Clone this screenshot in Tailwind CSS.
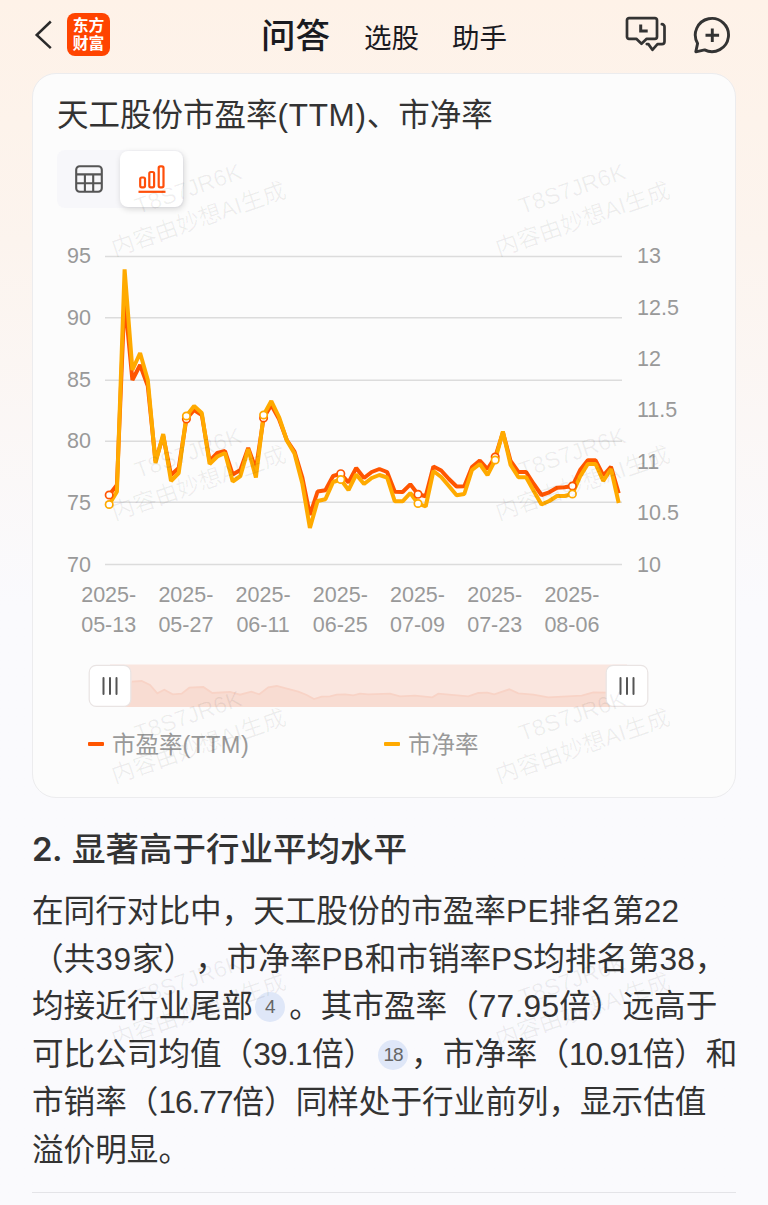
<!DOCTYPE html>
<html lang="zh-CN">
<head>
<meta charset="utf-8">
<title>问答</title>
<script src="https://cdn.jsdelivr.net/npm/@tailwindcss/browser@4"></script>
</head>
<body class="relative h-[1205px] w-[768px] overflow-hidden bg-[#fafafd] bg-linear-to-b from-[#fef2e8] from-0% via-[#fcf4ee] via-20% to-[#fafafd] to-50% font-['Liberation_Sans','Noto_Sans_CJK_SC',sans-serif] text-[#333] [text-spacing-trim:space-all]">

<header class="flex h-[73px] items-center pl-[34px] pr-[37px]">
  <svg class="h-[30px] w-[18px] shrink-0 -translate-y-[2px]" viewBox="0 0 18 30" fill="none" stroke="#2a2a2a" stroke-width="2.5"><path d="M16.8 1.500 2.700 15l14.100 13.200"/></svg>
  <div class="ml-[15px] flex h-[43px] w-[43px] shrink-0 -translate-y-[2px] flex-col items-center justify-center rounded-[8px] bg-[#ff4400] text-[15.8px] leading-[17.5px] font-bold text-white"><span>东方</span><span>财富</span></div>
  <nav class="ml-[151px] flex h-[50px] -translate-y-px items-baseline whitespace-nowrap text-[#1a1a1f]">
    <span class="w-[103px] text-[34.5px] leading-[50px] font-medium">问答</span>
    <span class="w-[88px] text-[27.5px]">选股</span>
    <span class="text-[27.5px]">助手</span>
  </nav>
  <svg class="ml-auto h-[38px] w-[42px] shrink-0 -translate-y-[2px]" viewBox="0 0 42 38" fill="none" stroke="#333" stroke-width="2.700" stroke-linejoin="round" stroke-linecap="round"><path d="M4 2.200h26a2 2 0 0 1 2 2v16.600a2 2 0 0 1-2 2h-8.300l-5.200 5-5.200-5H4a2 2 0 0 1-2-2V4.200a2 2 0 0 1 2-2z"/><path d="M36.800 8.200a2.600 2.600 0 0 1 2.700 2.600v14.700a2.600 2.600 0 0 1-2.600 2.600h-4.400l-5.100 5.700-4-5.700h-1.600"/><path d="M15.700 8.500v6.500h7" stroke-linecap="butt" stroke-linejoin="miter" stroke-width="3"/></svg>
  <svg class="ml-[26px] h-[38px] w-[38px] shrink-0 -translate-y-[2px]" viewBox="0 0 38 38" fill="none" stroke="#333" stroke-width="2.900" stroke-linejoin="round" stroke-linecap="round"><path d="M4.600 27.400A16.600 16.600 0 1 1 11.600 33.900L2.800 35.800z"/><path d="M19.300 12.500v13.600M12.500 19.300h13.600" stroke-linecap="butt"/></svg>
</header>

<main class="px-8">
  <section class="h-[725px] rounded-[24px] border border-[#ececee] bg-[#fcfcfc] px-[24px]">
    <h2 class="h-[76px] pt-[18px] text-[31.5px] leading-[46px] whitespace-nowrap">天工股份市盈率<span class="tracking-[0.7px]">(TTM)</span>、市净率</h2>
    <div class="flex h-[58px] w-[127px] items-center rounded-[8px] bg-[#f7f7fa]">
      <div class="flex h-full w-[63px] items-center justify-center">
        <svg class="h-[28px] w-[28px]" viewBox="0 0 28 28" fill="none" stroke="#555" stroke-width="2.100"><rect x="1.200" y="1.200" width="25.600" height="25.600" rx="3.500"/><path d="M1.200 9.400h25.600M1.200 18.300h25.600M9.900 9.400v17.400M18.200 9.400v17.400"/></svg>
      </div>
      <div class="flex h-[56px] w-[63px] items-center justify-center rounded-[8px] bg-white shadow-[1px_2px_6px_rgba(0,0,0,0.16)]">
        <svg class="h-[28px] w-[28px]" viewBox="0 0 28 28" fill="none" stroke="#ff4f0a" stroke-width="2.200"><rect x="2.200" y="12.500" width="4.800" height="9.800" rx="1.500"/><rect x="11.300" y="7" width="4.800" height="15.300" rx="1.500"/><rect x="20.700" y="1.400" width="4.800" height="20.900" rx="1.500"/><path d="M.5 26.800h27" stroke-width="2.200"/></svg>
      </div>
    </div>

    <svg class="block h-[442px] w-[654px]" viewBox="57 208 654 442" fill="none">
      <g stroke="#dcdcdc" stroke-width="1.500"><path d="M105 256.500h517M105 317.700h517M105 380.300h517M105 441.200h517M105 502.300h517M105 564.500h517"/></g>
      <g class="fill-[#999] text-[21.500px]">
        <g text-anchor="end"><text x="91" y="263.300">95</text><text x="91" y="325">90</text><text x="91" y="386.600">85</text><text x="91" y="448.200">80</text><text x="91" y="509.800">75</text><text x="91" y="571.500">70</text></g>
        <text x="637" y="263.300">13</text><text x="637" y="314.700">12.5</text><text x="637" y="366">12</text><text x="637" y="417.400">11.5</text><text x="637" y="468.700">11</text><text x="637" y="520.100">10.5</text><text x="637" y="571.500">10</text>
        <g text-anchor="middle">
          <text x="108.700" y="601.500">2025-</text><text x="108.700" y="632">05-13</text>
          <text x="185.900" y="601.500">2025-</text><text x="185.900" y="632">05-27</text>
          <text x="263.100" y="601.500">2025-</text><text x="263.100" y="632">06-11</text>
          <text x="340.300" y="601.500">2025-</text><text x="340.300" y="632">06-25</text>
          <text x="417.500" y="601.500">2025-</text><text x="417.500" y="632">07-09</text>
          <text x="494.700" y="601.500">2025-</text><text x="494.700" y="632">07-23</text>
          <text x="571.900" y="601.500">2025-</text><text x="571.900" y="632">08-06</text>
        </g>
      </g>
      <g id="series" stroke-width="4" stroke-linejoin="bevel"></g>
    </svg>

    <svg class="ml-[31px] block h-[64px] w-[562px]" viewBox="88 650 562 64" fill="none">
      <rect x="110" y="664.500" width="517" height="42.500" fill="#fae6df"/>
      <path id="mini" fill="#f8dcd2"/>
      <path id="miniLine" stroke="#f8d3c6" stroke-width="1.800"/>
      <g fill="#fff" stroke="#e9e4e3" stroke-width="1.200"><rect x="89.200" y="665.400" width="41.600" height="41" rx="7"/><rect x="606.200" y="665.400" width="41.600" height="41" rx="7"/></g>
      <path d="M103.500 678v16M110 678v16M116.500 678v16M620.500 678v16M627 678v16M633.500 678v16" stroke="#555" stroke-width="2" stroke-linecap="round"/>
    </svg>

    <div class="ml-[31px] flex h-[60px] items-center text-[23.500px] whitespace-nowrap text-[#999]">
      <div class="flex w-[296px] items-center gap-[8px]"><span class="h-[4px] w-[16px] rounded-[1px] bg-[#ff5500]"></span><span class="mt-[3px]">市盈率<span class="tracking-[0.6px]">(TTM)</span></span></div>
      <div class="flex items-center gap-[8px]"><span class="h-[4px] w-[16px] rounded-[1px] bg-[#ffaa00]"></span><span class="mt-[3px]">市净率</span></div>
    </div>
  </section>

  <h3 class="mt-[27px] flex h-[50px] items-center gap-[12px] text-[33.500px] font-medium whitespace-nowrap"><span class="w-[28px] font-['Inter'] text-[33px] font-semibold tracking-[-0.5px]">2.</span><span>显著高于行业平均水平</span></h3>
  <div class="mt-[13px] text-[31.600px] leading-[47.700px] whitespace-nowrap">
    <p>在同行对比中，天工股份的市盈率<span class="tracking-[0.5px]">PE</span>排名第22</p>
    <p>（共<span class="tracking-[0.8px]">39</span>家），市净率<span class="tracking-[0.5px]">PB</span>和市销率PS均排名第38，</p>
    <p class="flex items-center">均接近行业尾部<span class="mr-[4px] ml-[2px] h-[30px] w-[30px] shrink-0 rounded-full bg-[#dfe7f8] text-center text-[19px] leading-[30px] text-[#666]">4</span>。其市盈率（<span class="tracking-[0.300px]">77.95</span>倍）远高于</p>
    <p class="flex items-center">可比公司均值（<span class="tracking-[-0.700px]">39.1</span>倍）<span class="mx-[3px] h-[30px] w-[30px] shrink-0 rounded-full bg-[#dfe7f8] text-center text-[19px] leading-[30px] tracking-[-1px] text-[#666]">18</span>，市净率（<span class="tracking-[-1.100px]">10.91</span>倍）和</p>
    <p>市销率（<span class="tracking-[-1px]">16.77</span>倍）同样处于行业前列，显示估值</p>
    <p>溢价明显。</p>
  </div>
  <div class="mt-[18px] h-px bg-[#e4e4e8]"></div>
</main>

<!-- Watermark layer -->
<div class="pointer-events-none absolute left-0 top-[73px] grid w-[768px] grid-cols-2 text-center text-[23px] leading-[31.500px] whitespace-nowrap text-black/6">
  <div class="flex h-[263.500px] items-center justify-center pl-[3px]"><div class="-rotate-[19deg]">T8S7JR6K<br>内容由妙想AI生成</div></div>
  <div class="flex h-[263.500px] items-center justify-center pl-[3px]"><div class="-rotate-[19deg]">T8S7JR6K<br>内容由妙想AI生成</div></div>
  <div class="flex h-[263.500px] items-center justify-center pl-[3px]"><div class="-rotate-[19deg]">T8S7JR6K<br>内容由妙想AI生成</div></div>
  <div class="flex h-[263.500px] items-center justify-center pl-[3px]"><div class="-rotate-[19deg]">T8S7JR6K<br>内容由妙想AI生成</div></div>
  <div class="flex h-[263.500px] items-center justify-center pl-[3px]"><div class="-rotate-[19deg]">T8S7JR6K<br>内容由妙想AI生成</div></div>
  <div class="flex h-[263.500px] items-center justify-center pl-[3px]"><div class="-rotate-[19deg]">T8S7JR6K<br>内容由妙想AI生成</div></div>
  <div class="flex h-[263.500px] items-center justify-center pl-[3px]"><div class="-rotate-[19deg]">T8S7JR6K<br>内容由妙想AI生成</div></div>
  <div class="flex h-[263.500px] items-center justify-center pl-[3px]"><div class="-rotate-[19deg]">T8S7JR6K<br>内容由妙想AI生成</div></div>
</div>

<script>
const pe=[495,485,298,380,365,386,461,436,475,468,419,410,415,461,453,451,474.5,470,448,469,418,405,419,440,451.5,477,515,491.5,490.3,476,473.7,482.5,468,478,472,469,472,491.7,492,484.3,494.3,496.3,466.5,470.5,479,486.5,486.3,467,460.5,469,457,432.5,461,472,472,484,495,492.3,487.7,487.3,486,470,460.3,460.3,475.5,466.7,493.3];
const pb=[504.5,491.7,269.3,370,353,380,463,434,481,473,416,406,413,464,456.5,453,481.5,476,449,477.5,415,401,417,440.5,453.5,483,528,501,499.3,482,479.5,490,474.5,484,478,475,477.5,501.3,501.3,493,503.5,506.5,471,477,486,495.3,494,470,464,475,460,431.5,465,477.3,477.3,491,504.5,501,496,496,494,476.5,464,464,481,469,503];
const px=i=>(109.2+i*7.72).toFixed(1);
let out='';
for(const [d,c] of [[pe,'#ff5500'],[pb,'#ffaa00']]){
  out+=`<polyline stroke="${c}" points="${d.map((y,i)=>px(i)+','+y).join(' ')}"/>`;
}
for(const [d,c] of [[pe,'#ff5500'],[pb,'#ffaa00']]){
  for(let i=0;i<67;i+=10) out+=`<circle cx="${px(i)}" cy="${d[i]}" r="3.700" fill="#fff" stroke="${c}" stroke-width="1.700"/>`;
}
document.getElementById('series').innerHTML=out;
const a=[[131.7,681.7],[141.7,681],[150,685],[157.3,693.3],[164.3,689.7],[172.7,694.3],[181.7,693.7],[189.3,687.7],[203.3,687],[212.3,693],[230,692],[240,694.7],[251.3,691.7],[259.3,694.3],[268.3,687.3],[276.7,686],[298.3,691.7],[306.7,695],[314,699],[321.7,696.7],[330,696.3],[336.7,694.7],[345,694.3],[353.3,695.3],[360,693.7],[368.3,694.3],[390,693.7],[400,696.3],[415,695.7],[432.3,697.3],[438.3,693.7],[468.3,696.3],[478.3,693],[487.3,692.7],[494.3,694.3],[509.3,689.3],[518.3,693.3],[533.3,694.7],[548.3,697.3],[581.7,695.7],[593.3,692.3],[607,692.7]];
const line=a.map(p=>p.join(' ')).join('L');
document.getElementById('mini').setAttribute('d','M125 707L125 690L'+line+'L610 707Z');
document.getElementById('miniLine').setAttribute('d','M'+line);
</script>
</body>
</html>
